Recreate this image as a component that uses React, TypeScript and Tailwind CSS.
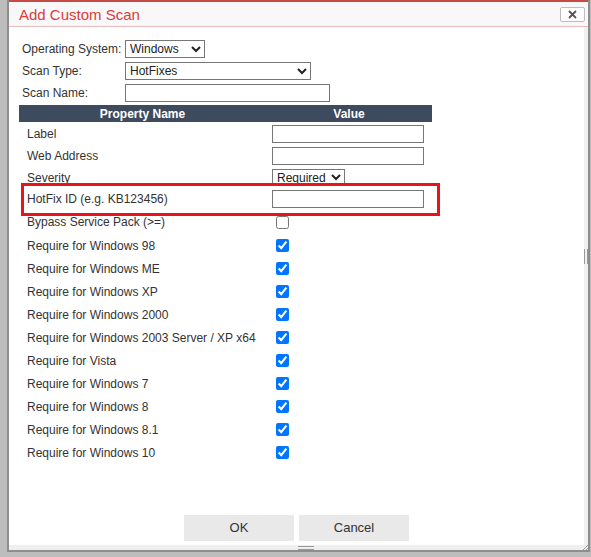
import React from 'react';

const textRows = [
  { label: 'Label', kind: 'input' },
  { label: 'Web Address', kind: 'input' },
  { label: 'Severity', kind: 'select' },
];

const checkRows = [
  { label: 'Bypass Service Pack (>=)', checked: false },
  { label: 'Require for Windows 98', checked: true },
  { label: 'Require for Windows ME', checked: true },
  { label: 'Require for Windows XP', checked: true },
  { label: 'Require for Windows 2000', checked: true },
  { label: 'Require for Windows 2003 Server / XP x64', checked: true },
  { label: 'Require for Vista', checked: true },
  { label: 'Require for Windows 7', checked: true },
  { label: 'Require for Windows 8', checked: true },
  { label: 'Require for Windows 8.1', checked: true },
  { label: 'Require for Windows 10', checked: true },
];

function TextBox() {
  return (
    <input
      type="text"
      className="ml-[6px] h-[18px] w-[152px] border border-[#767676] bg-white px-1 text-[12px]"
    />
  );
}

export default function App() {
  return (
    <div className="h-[557px] w-[591px] overflow-hidden bg-[#bdbdbd] font-['Liberation_Sans',Arial,sans-serif] text-[12px] text-[#333]">
      <div className="ml-[7px] flex h-[552px] w-[583px] flex-col border-x-2 border-b-2 border-[#8e8e8e] bg-white">
        {/* barra de título */}
        <div className="flex h-[27px] shrink-0 items-center justify-between border-t-2 border-b border-t-[#c84a44] border-b-[#e8bcbc] bg-[#f8f8f8] pl-[10px] pr-[3px]">
          <span className="text-[15px] leading-none text-[#dd3b3b]">Add Custom Scan</span>
          <button className="flex h-[15px] w-[25px] items-center justify-center rounded-[2px] border border-[#bdbdbd] bg-white">
            <svg width="9" height="9" viewBox="0 0 9 9">
              <path d="M1 1L8 8M8 1L1 8" stroke="#555" strokeWidth="1.8" />
            </svg>
          </button>
        </div>

        <div className="flex min-h-0 flex-1">
          <div className="flex flex-1 flex-col pt-[13px]">
            {/* campos principais */}
            <div className="flex flex-col gap-[4px] pl-[13px]">
              <div className="flex h-[18px] items-center">
                <span className="w-[103px]">Operating System:</span>
                <select className="h-[18px] w-[80px] border border-[#767676] bg-white text-[12px] text-[#222]">
                  <option>Windows</option>
                </select>
              </div>
              <div className="flex h-[18px] items-center">
                <span className="w-[103px]">Scan Type:</span>
                <select className="h-[18px] w-[186px] border border-[#767676] bg-white text-[12px] text-[#222]">
                  <option>HotFixes</option>
                </select>
              </div>
              <div className="flex h-[18px] items-center">
                <span className="w-[103px]">Scan Name:</span>
                <input
                  type="text"
                  className="h-[18px] w-[205px] border border-[#767676] bg-white text-[12px]"
                />
              </div>
            </div>

            {/* tabela de propriedades */}
            <div className="ml-[10px] mt-[3px] w-[413px]">
              <div className="flex h-[17px] items-center bg-[#3e4a5d] font-bold text-white">
                <div className="w-[247px] text-center">Property Name</div>
                <div className="flex-1 text-center">Value</div>
              </div>

              {textRows.map((row) => (
                <div key={row.label} className="flex h-[22px] items-center pt-px">
                  <div className="w-[247px] pl-[8px]">{row.label}</div>
                  {row.kind === 'input' ? (
                    <TextBox />
                  ) : (
                    <select className="ml-[6px] h-[17px] w-[73px] border border-[#767676] bg-white text-[12px] text-[#222]">
                      <option>Required</option>
                    </select>
                  )}
                </div>
              ))}

              <div className="relative flex h-[22px] items-center">
                <div className="w-[247px] pl-[8px]">HotFix ID (e.g. KB123456)</div>
                <TextBox />
                <div className="pointer-events-none absolute left-[2px] top-[-5px] h-[33px] w-[419px] border-[3px] border-[#e8141a]" />
              </div>

              {checkRows.map((row, i) => (
                <div
                  key={row.label}
                  className={`flex items-center ${i === 0 ? 'h-[24px]' : 'h-[23px]'}`}
                >
                  <div className="w-[247px] pl-[8px]">{row.label}</div>
                  <input
                    type="checkbox"
                    defaultChecked={row.checked}
                    className="ml-[10px] h-[13px] w-[13px]"
                  />
                </div>
              ))}
            </div>

            {/* botões */}
            <div className="mt-auto mb-[4px] flex justify-center gap-[5px]">
              <button className="h-[26px] w-[110px] bg-[#e9e9e9] text-[13px] text-[#333]">OK</button>
              <button className="h-[26px] w-[110px] bg-[#e9e9e9] text-[13px] text-[#333]">Cancel</button>
            </div>
          </div>

          {/* faixa lateral com alça */}
          <div className="flex w-[4px] flex-col bg-[#f0f0f0] pt-[222px]">
            <div className="flex h-[15px] justify-between">
              <div className="w-px bg-[#999]" />
              <div className="w-px bg-[#999]" />
            </div>
          </div>
        </div>

        {/* faixa inferior com alça */}
        <div className="relative flex h-[5px] shrink-0 items-center justify-center bg-[#efefef]">
          <div className="ml-[14px] flex h-[4px] w-[16px] flex-col justify-between">
            <div className="h-px bg-[#999]" />
            <div className="h-px bg-[#999]" />
          </div>
          <svg className="absolute bottom-0 right-0" width="6" height="6" viewBox="0 0 6 6">
            <path d="M6 1L1 6M6 4L4 6" stroke="#999" strokeWidth="1" />
          </svg>
        </div>
      </div>
    </div>
  );
}
